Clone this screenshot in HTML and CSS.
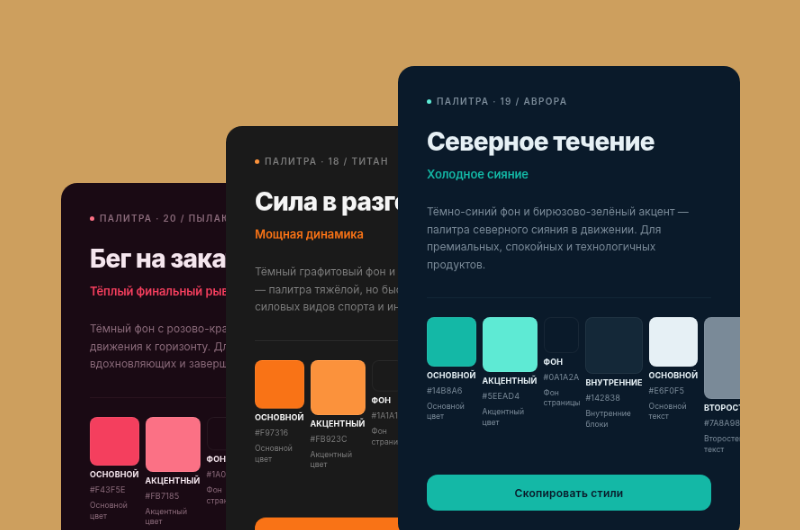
FILE: index.html
```html
<!DOCTYPE html>
<html lang="ru">
<head>
<meta charset="utf-8">
<title>Палитры</title>
<link rel="stylesheet" href="styles.css">
</head>
<body>
<main class="stage">
  <article class="card card-sunset">
    <div class="eyebrow"><span class="dot"></span>Палитра · 20 / Пылающий закат</div>
    <h2 class="title">Бег на закате</h2>
    <p class="subtitle">Тёплый финальный рывок</p>
    <p class="desc">Тёмный фон с розово-красным акцентом — энергия движения к горизонту. Для спортивных, вдохновляющих и завершающих проектов.</p>
    <hr class="rule">
    <div class="swatches">
      <div class="sw"><div class="chip c1"></div><b>Основной</b><code>#F43F5E</code><small>Основной цвет</small></div>
      <div class="sw"><div class="chip c2"></div><b>Акцентный</b><code>#FB7185</code><small>Акцентный цвет</small></div>
      <div class="sw"><div class="chip c3"></div><b>Фон</b><code>#1A0A14</code><small>Фон страницы</small></div>
      <div class="sw"><div class="chip c4"></div><b>Внутренние</b><code>#2A1420</code><small>Внутренние блоки</small></div>
      <div class="sw"><div class="chip c5"></div><b>Основной</b><code>#F5E6EE</code><small>Основной текст</small></div>
      <div class="sw"><div class="chip c6"></div><b>Второстепенный</b><code>#8A6A7A</code><small>Второстепенный текст</small></div>
    </div>
    <button class="copy">Скопировать стили</button>
  </article>
  <article class="card card-titan">
    <div class="eyebrow"><span class="dot"></span>Палитра · 18 / Титан</div>
    <h2 class="title">Сила в разгоне</h2>
    <p class="subtitle">Мощная динамика</p>
    <p class="desc">Тёмный графитовый фон и ярко-оранжевый акцент — палитра тяжёлой, но быстрой энергии. Для силовых видов спорта и индустрии.</p>
    <hr class="rule">
    <div class="swatches">
      <div class="sw"><div class="chip c1"></div><b>Основной</b><code>#F97316</code><small>Основной цвет</small></div>
      <div class="sw"><div class="chip c2"></div><b>Акцентный</b><code>#FB923C</code><small>Акцентный цвет</small></div>
      <div class="sw"><div class="chip c3"></div><b>Фон</b><code>#1A1A1A</code><small>Фон страницы</small></div>
      <div class="sw"><div class="chip c4"></div><b>Внутренние</b><code>#2A2A2A</code><small>Внутренние блоки</small></div>
      <div class="sw"><div class="chip c5"></div><b>Основной</b><code>#F5F5F5</code><small>Основной текст</small></div>
      <div class="sw"><div class="chip c6"></div><b>Второстепенный</b><code>#7A7A7A</code><small>Второстепенный текст</small></div>
    </div>
    <button class="copy">Скопировать стили</button>
  </article>
  <article class="card card-aurora">
    <div class="eyebrow"><span class="dot"></span>Палитра · 19 / Аврора</div>
    <h2 class="title">Северное течение</h2>
    <p class="subtitle">Холодное сияние</p>
    <p class="desc">Тёмно-синий фон и бирюзово-зелёный акцент — палитра северного сияния в движении. Для премиальных, спокойных и технологичных продуктов.</p>
    <hr class="rule">
    <div class="swatches">
      <div class="sw"><div class="chip c1"></div><b>Основной</b><code>#14B8A6</code><small>Основной цвет</small></div>
      <div class="sw"><div class="chip c2"></div><b>Акцентный</b><code>#5EEAD4</code><small>Акцентный цвет</small></div>
      <div class="sw"><div class="chip c3"></div><b>Фон</b><code>#0A1A2A</code><small>Фон страницы</small></div>
      <div class="sw"><div class="chip c4"></div><b>Внутренние</b><code>#142838</code><small>Внутренние блоки</small></div>
      <div class="sw"><div class="chip c5"></div><b>Основной</b><code>#E6F0F5</code><small>Основной текст</small></div>
      <div class="sw"><div class="chip c6"></div><b>Второстепенный</b><code>#7A8A98</code><small>Второстепенный текст</small></div>
    </div>
    <button class="copy">Скопировать стили</button>
  </article>
</main>
</body>
</html>
```
FILE: styles.css
```css
* { box-sizing: border-box; }
html, body { margin: 0; height: 100%; }
body { background: #cd9f5e; font-family: Inter, "Noto Sans", sans-serif; overflow: hidden; }
.stage { position: relative; width: 800px; height: 530px; overflow: hidden; }
.card {
  position: absolute; width: 380px; padding: 32px;
  border-radius: 18px; overflow: hidden; display: flex; flex-direction: column;
  background: var(--bg); color: var(--text);
  transform: scale(.9); transform-origin: 0 0; will-change: transform;
}
.card-sunset { left: 61px; top: 183px; --bg: #1a0a14; --text: #f5e6ee; --muted: #8a6a7a; --line: #2a1420; --primary: #f43f5e; --accent: #fb7185; --c5: #f5e6ee; }
.card-titan { left: 226px; top: 126px; --bg: #1a1a1a; --text: #f5f5f5; --muted: #7a7a7a; --line: #2a2a2a; --primary: #f97316; --accent: #fb923c; --c5: #f5f5f5; }
.card-aurora { left: 398px; top: 66px; --bg: #0a1a2a; --text: #e6f0f5; --muted: #7a8a98; --line: #142838; --primary: #14b8a6; --accent: #5eead4; --c5: #e6f0f5; }
.eyebrow {
  display: flex; align-items: center; gap: 6px; height: 14px; white-space: nowrap;
  font-size: 10px; font-weight: 600; letter-spacing: 1.3px; text-transform: uppercase; color: var(--muted);
}
.dot { width: 5px; height: 5px; border-radius: 50%; background: var(--accent); }
.title { margin: 21px 0 0; font-size: 28px; line-height: 34px; font-weight: 800; letter-spacing: -.7px; white-space: nowrap; }
.subtitle { margin: 11px 0 0; font-size: 13px; line-height: 16px; font-weight: 600; letter-spacing: -.1px; color: var(--primary); white-space: nowrap; }
.desc { margin: 24px 0 0; font-size: 12px; line-height: 19.5px; color: var(--muted); }
.rule { margin: 27px 0 0; border: 0; border-top: 1px solid var(--line); width: 100%; flex: none; }
.swatches { display: flex; gap: 7px; margin-top: 21px; align-items: flex-start; flex: none; }
.sw { flex: none; display: flex; flex-direction: column; }
.chip { width: 100%; aspect-ratio: 1; border-radius: 8px; border: 1px solid rgba(255,255,255,.06); }
.c1 { background: var(--primary); }
.c2 { background: var(--accent); }
.c3 { background: var(--bg); }
.c4 { background: var(--line); }
.c5 { background: var(--c5); }
.c6 { background: var(--muted); }
.sw b { margin-top: 4px; font-size: 9px; line-height: 12px; font-weight: 700; letter-spacing: .1px; text-transform: uppercase; white-space: nowrap; }
.sw code { margin-top: 5px; font: 400 9px/12px Inter, sans-serif; letter-spacing: .15px; color: var(--muted); }
.sw small { margin-top: 6px; width: 0; min-width: 100%; font-size: 8.6px; line-height: 11.5px; color: var(--muted); }
.copy {
  flex: none; height: 40px; margin-top: 22px; border: 0; border-radius: 12px; background: var(--primary);
  font: 600 12px Inter, sans-serif; letter-spacing: .24px; color: var(--bg);
}
```
